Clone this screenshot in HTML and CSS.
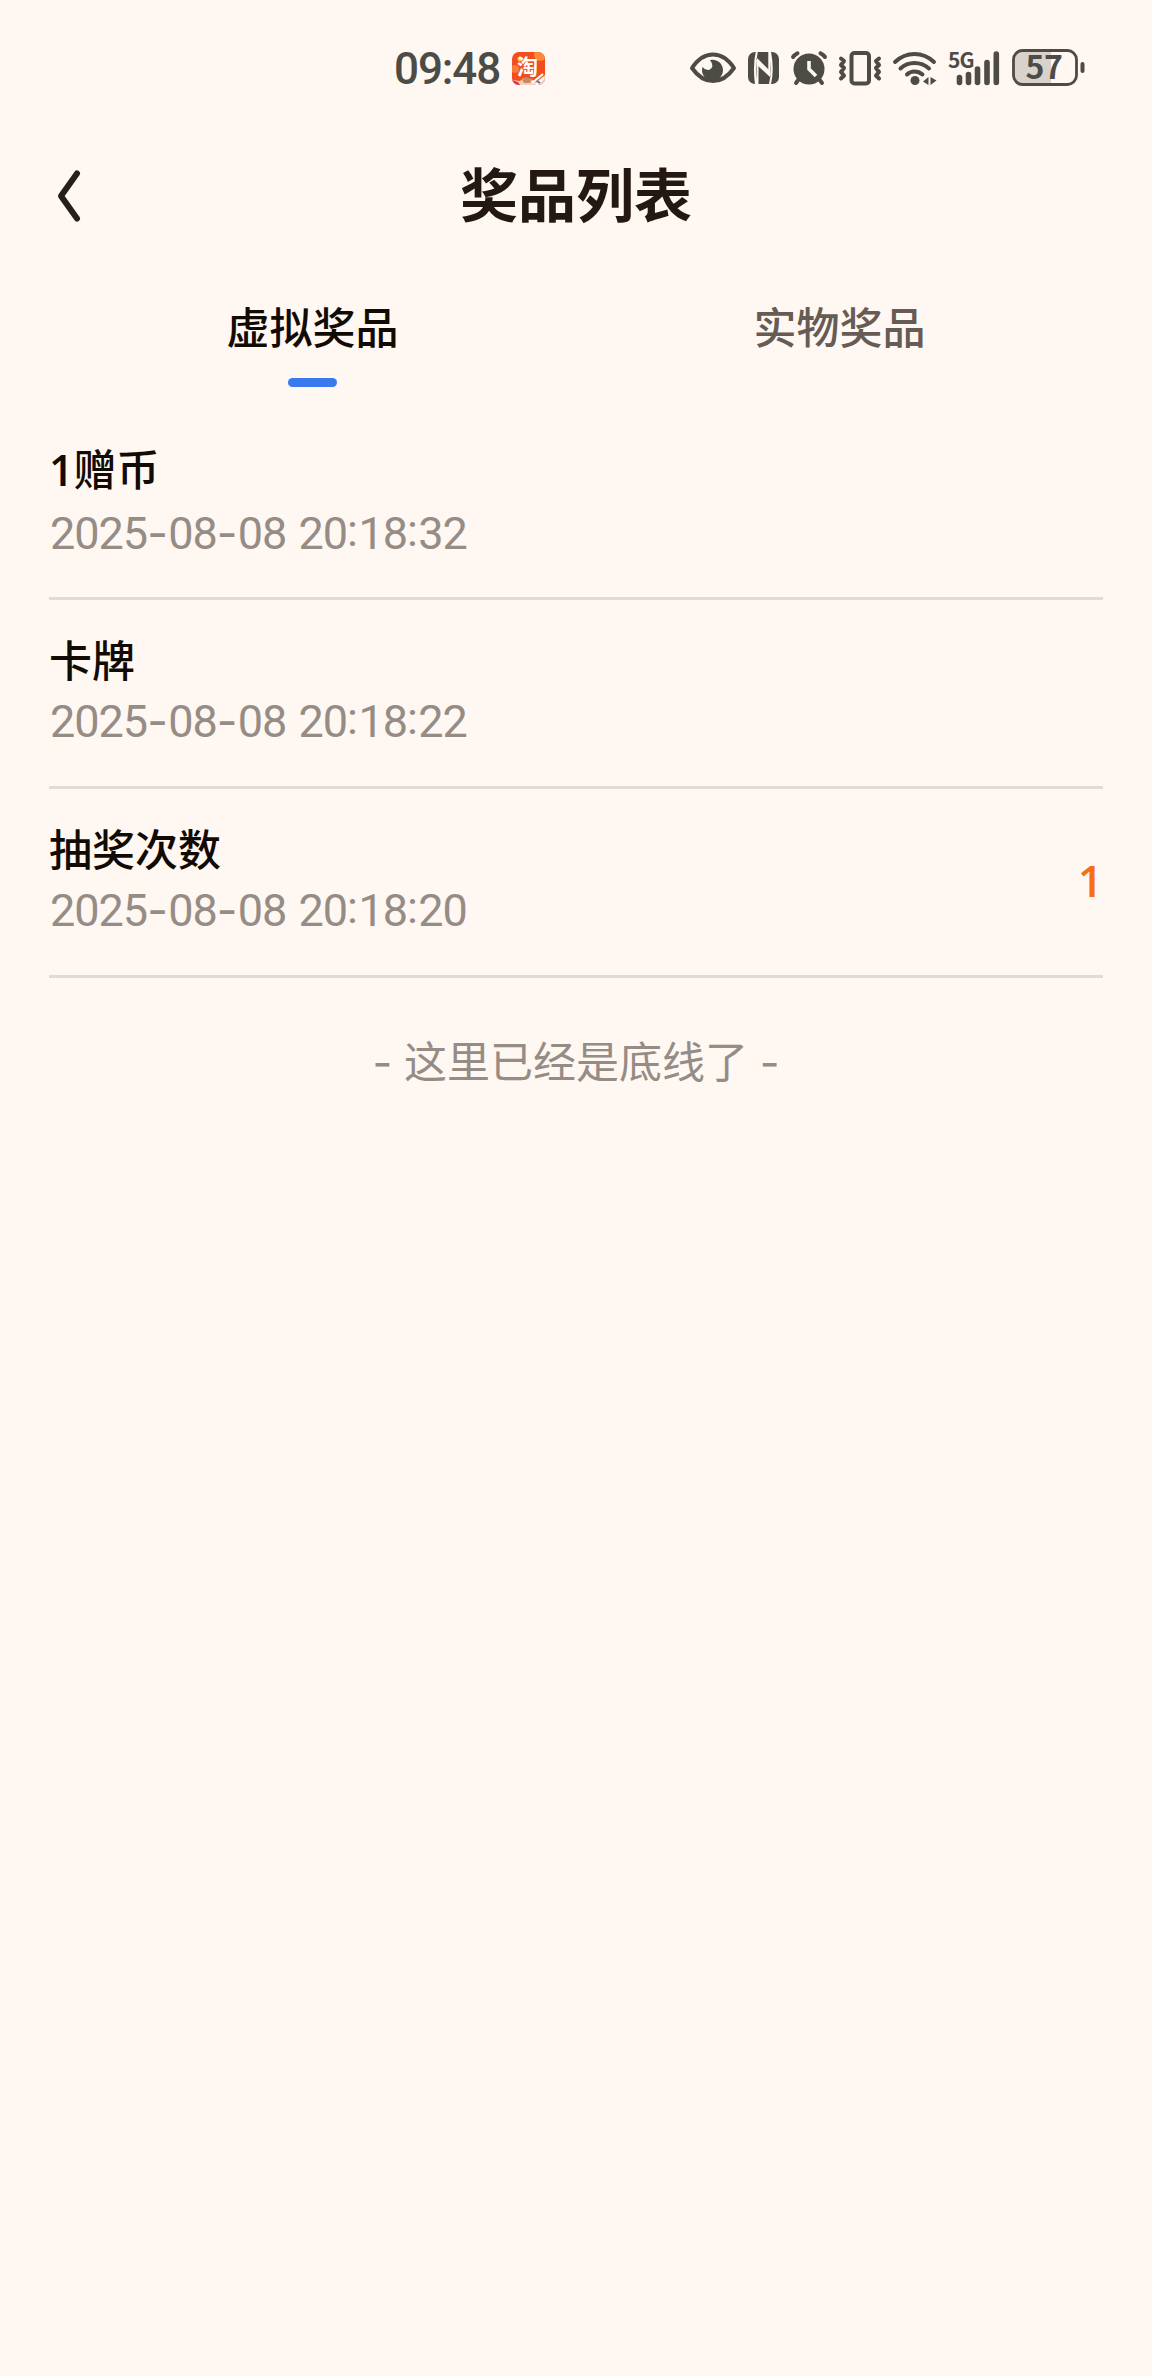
FILE: index.html
```html
<!DOCTYPE html>
<html lang="zh-CN">
<head>
  <meta charset="UTF-8" />
  <meta name="viewport" content="width=device-width, initial-scale=1.0"/>
  <title>奖品列表</title>
  <link rel="stylesheet" href="styles.css">
</head>
<body>
  <div class="status-bar">
    <div class="status-left">
      <span class="time">09:48</span>
      <svg class="app-icon" width="33" height="33" viewBox="0 0 33 33">
        <defs>
          <clipPath id="appClip"><rect width="33" height="33" rx="7"/></clipPath>
        </defs>
        <g clip-path="url(#appClip)">
          <rect width="33" height="33" fill="#f04e1e"/>
          <circle cx="28" cy="3" r="6" fill="#fb8a3c"/>
          <circle cx="3" cy="17" r="4" fill="#fa7a3a"/>
          <circle cx="8" cy="7" r="2.5" fill="#ffc93c"/>
          <path d="M0 28l8 1 4-3 7 1 5 3 9-7v10H0z" fill="#f3d2bd"/>
          <path d="M0 28l6 2 2 3H0z" fill="#e23350"/>
          <path d="M10 28l4-3 6 2-2 4h-6z" fill="#c98a62"/>
          <path d="M20 31l11-9M24 33l8-7" stroke="#fff" stroke-width="2"/>
          <path d="M25 29l3 2" stroke="#5a6ab8" stroke-width="2"/>
        </g>
        <text class="app-char" x="5" y="22">淘</text>
      </svg>
    </div>
    <div class="status-right">
      <svg width="46" height="32" viewBox="0 0 46 32">
        <path d="M2 16Q11 2.5 23 2.5T44 16Q35 29 23 29T2 16z" fill="none" stroke="#4d4b45" stroke-width="4" stroke-linejoin="round"/>
        <path d="M20 8A10.500 10.500 0 1 1 12.500 15Q15 18.500 19 18Q25.500 15.500 20 8z" fill="#4d4b45"/>
      </svg>
      <svg class="nfc" width="31" height="32" viewBox="0 0 31 32">
        <rect width="31" height="32" rx="7" fill="#4d4b45"/>
        <path d="M8.800 0Q5.500 14 8 32M9.500 8V32M22 0Q25.500 18 22 32M21.300 0V23" fill="none" stroke="#fff7f1" stroke-width="2"/>
        <path d="M9 6L22 19V25L9 13z" fill="#fff7f1"/>
      </svg>
      <svg class="alarm" width="36" height="34" viewBox="0 0 36 34">
        <circle cx="18" cy="18" r="15.500" fill="#4d4b45"/>
        <path d="M8 28L5 32M28 28L31 32M2 6Q3.500 4 6.500 2.300M34 6Q32.500 4 29.500 2.300" stroke="#4d4b45" stroke-width="4" stroke-linecap="round" fill="none"/>
        <path d="M18 10V18L25 25" fill="none" stroke="#fff7f1" stroke-width="3.600"/>
      </svg>
      <svg class="vibrate" width="42" height="34" viewBox="0 0 42 34">
        <rect x="12.500" y="2" width="17.500" height="30.500" rx="3" fill="none" stroke="#4d4b45" stroke-width="4"/>
        <path d="M2 7.500L5 10L2 14L5 17L2 21L5 24.500L2 27.500M40 7.500L37 10L40 14L37 17L40 21L37 24.500L40 27.500" fill="none" stroke="#4d4b45" stroke-width="4" stroke-linecap="round" stroke-linejoin="round"/>
      </svg>
      <svg class="wifi" width="44" height="34" viewBox="0 0 44 34">
        <path d="M2 11Q10.500 3 21.500 3T41 11M7.500 17.500Q13 12 21.500 12T36 17.500M14 23.500Q17 20.500 21.500 20.500T29.500 23.500" fill="none" stroke="#4d4b45" stroke-width="4" stroke-linecap="round"/>
        <circle cx="22" cy="29.500" r="4.500" fill="#4d4b45"/>
        <path d="M30 30.500L35.500 26V34zM37.500 26L43.500 29.500L37.500 34z" fill="#4d4b45"/>
      </svg>
      <svg class="signal" width="51" height="34" viewBox="0 0 51 34">
        <text class="net-type" x="-1" y="17">5G</text>
        <path d="M10.500 26.500V31.500M19.500 23.500V31.500M28.500 18V31.500M38 11.500V31.500M47.300 3V31.500" stroke="#4d4b45" stroke-width="5.600" stroke-linecap="round"/>
      </svg>
      <svg class="battery" width="73" height="37" viewBox="0 0 73 37">
        <path d="M11 2H39V35H11Q2 35 2 27V10Q2 2 11 2z" fill="#d9d1cc"/>
        <rect x="1.500" y="1.500" width="63" height="34" rx="9" fill="none" stroke="#4d4b45" stroke-width="2.800"/>
        <rect x="68.500" y="13" width="4" height="11" rx="2" fill="#4d4b45"/>
        <text class="level" x="32" y="30" text-anchor="middle">57</text>
      </svg>
    </div>
  </div>

  <div class="header">
    <svg class="back" width="24" height="54" viewBox="0 0 24 54">
      <path d="M20 4.500L4 27L20 49.500" fill="none" stroke="#261e1c" stroke-width="6" stroke-linecap="round" stroke-linejoin="round"/>
    </svg>
    <h1>奖品列表</h1>
  </div>

  <div class="tabs">
    <div class="tab active">虚拟奖品</div>
    <div class="tab">实物奖品</div>
  </div>

  <div class="list">
    <div class="item">
      <div class="info">
        <div class="name"><span class="num">1</span>赠币</div>
        <div class="date">2025<span class="dash">-</span>08<span class="dash">-</span>08 20<span class="colon">:</span>18<span class="colon">:</span>32</div>
      </div>
    </div>
    <div class="item">
      <div class="info">
        <div class="name">卡牌</div>
        <div class="date">2025<span class="dash">-</span>08<span class="dash">-</span>08 20<span class="colon">:</span>18<span class="colon">:</span>22</div>
      </div>
    </div>
    <div class="item">
      <div class="info">
        <div class="name">抽奖次数</div>
        <div class="date">2025<span class="dash">-</span>08<span class="dash">-</span>08 20<span class="colon">:</span>18<span class="colon">:</span>20</div>
      </div>
      <div class="count">1</div>
    </div>
  </div>

  <p class="end"><span class="dash">-</span> 这里已经是底线了 <span class="dash">-</span></p>
</body>
</html>
```
FILE: styles.css
```css
* {
    box-sizing: border-box;
}

body {
    margin: 0;
    min-height: 2376px;
    background: #fff7f1;
    font-family: "Noto Sans CJK SC", sans-serif;
    color: #120a04;
}

svg {
    display: block;
    flex: none;
    overflow: visible;
}

.status-bar {
    display: flex;
    justify-content: space-between;
    height: 135px;
    padding: 0 67px 0 394px;
}

.status-left,
.status-right {
    display: flex;
    align-items: center;
}

.time {
    width: 118px;
    font-family: Roboto, sans-serif;
    font-size: 44px;
    font-weight: 500;
    letter-spacing: -1.1px;
    color: #4d4b45;
    line-height: 60px;
    padding-top: 2px;
}

.app-icon {
    margin-top: 2px;
}

.app-char {
    font-size: 21px;
    font-weight: 700;
    fill: #fff;
}

.nfc,
.alarm,
.vibrate,
.wifi,
.signal,
.battery {
    margin-left: 12px;
}

.net-type {
    font-family: "Noto Sans CJK SC", sans-serif;
    font-size: 21px;
    font-weight: 700;
    letter-spacing: -1px;
    fill: #4d4b45;
}

.level {
    font-family: "Noto Sans CJK SC", sans-serif;
    font-size: 32px;
    font-weight: 700;
    letter-spacing: -0.5px;
    fill: #4d4b45;
}

.header {
    display: flex;
    align-items: center;
    height: 120px;
    padding: 2px 57px 0;
}

.header h1 {
    flex: 1;
    margin: -9px 24px 0 0;
    font-size: 58px;
    font-weight: 700;
    line-height: 80px;
    text-align: center;
    color: #231912;
}

.tabs {
    display: flex;
    padding: 0 49px;
    height: 154px;
}

.tab {
    flex: 1;
    display: flex;
    flex-direction: column;
    align-items: center;
    padding-top: 40px;
    font-size: 43px;
    font-weight: 500;
    line-height: 60px;
    color: #665b55;
}

.tab.active {
    color: #120a04;
}

.tab.active::after {
    content: "";
    width: 49px;
    height: 9px;
    margin-top: 23px;
    border-radius: 5px;
    background: #397bef;
}

.list {
    padding: 2px 49px 0;
}

.item {
    display: flex;
    align-items: center;
    justify-content: space-between;
    height: 189px;
    padding-bottom: 4px;
    border-bottom: 3px solid #e3dad5;
}

.name {
    font-size: 43px;
    font-weight: 500;
    line-height: 60px;
}

.num,
.count {
    font-family: "Open Sans", sans-serif;
    font-weight: 600;
}

.date {
    padding-left: 1px;
    font-family: Roboto, sans-serif;
    font-size: 45px;
    line-height: 66px;
    letter-spacing: -1px;
    word-spacing: 2px;
    color: #968c86;
}

.dash {
    font-family: Inter, sans-serif;
}

.date .dash {
    letter-spacing: 0.3px;
}

.colon {
    position: relative;
    top: -3px;
    letter-spacing: 0.4px;
}

.count {
    font-size: 44px;
    color: #f66f15;
}

.end {
    margin: 51px 0 0;
    font-size: 43px;
    line-height: 60px;
    word-spacing: 2px;
    text-align: center;
    color: #968c86;
}
```
